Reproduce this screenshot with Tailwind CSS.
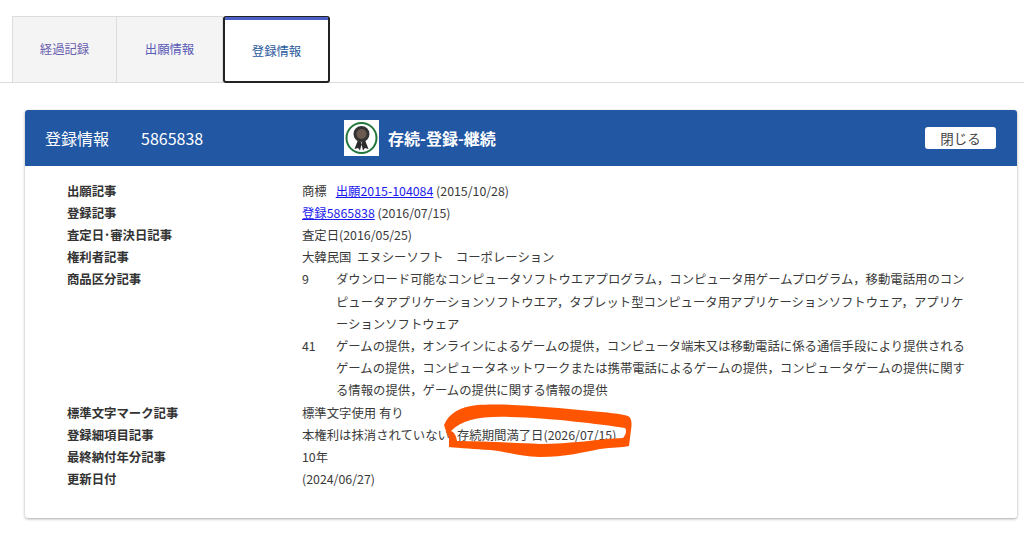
<!DOCTYPE html>
<html lang="ja">
<head>
<meta charset="utf-8">
<script src="https://cdn.jsdelivr.net/npm/@tailwindcss/browser@4"></script>
</head>
<body class="bg-white overflow-hidden font-['Noto_Sans_CJK_JP','Noto_Sans',sans-serif] text-[12.36px] leading-[22.2px] text-[#3a3a3a]">
<div class="relative h-[533px] w-[1024px] overflow-hidden pt-4">
  <div class="flex h-[67px] items-stretch border-b border-[#dcdcdc] pl-3">
    <div class="flex w-[105px] items-center justify-center border border-b-0 border-[#dcdcdc] bg-[#f4f4f4] pb-[1px] text-[#6a5fb0]">経過記録</div>
    <div class="flex w-[106px] items-center justify-center border-y border-r border-b-0 border-[#dcdcdc] bg-[#f4f4f4] pb-[1px] text-[#5a5ab8]">出願情報</div>
    <div class="-mb-px w-[107px] rounded-[3px] border-2 border-t border-[#222222] bg-white">
      <div class="flex h-full items-center justify-center border-t-[3px] border-t-[#4a5fc8] pt-[1px] text-[#2a5a9e]">登録情報</div>
    </div>
  </div>
  <div class="mx-[25px] mt-[27px] h-[408px] w-[992px] rounded-[3px] bg-white shadow-[0_1px_3px_rgba(0,0,0,0.35)]">
    <div class="flex h-[56px] items-center rounded-t-[3px] bg-[#2257a4] pl-[20px] pr-[21px] text-white">
      <span class="w-[96px] text-[16px]">登録情報</span>
      <span class="w-[203px] text-[16px]">5865838</span>
      <span class="flex h-[36px] w-[35px] items-center justify-center bg-white">
        <svg viewBox="0 0 35 36" class="h-[36px] w-[35px]">
          <circle cx="17.5" cy="18" r="15" fill="#fff" stroke="#22763a" stroke-width="2"/>
          <path d="M14 20l-3.5 9 3.500-1 2 2.500 2-8zM21 20l3.500 9-3.500-1-2 2.500-2-8z" fill="#2c2c2c"/>
          <circle cx="17.500" cy="14" r="6.500" fill="#6b5a50" stroke="#333" stroke-width="3"/>
        </svg>
      </span>
      <span class="ml-[9px] text-[16px] font-bold">存続-登録-継続</span>
      <span class="ml-auto flex h-[22px] w-[71px] items-center justify-center rounded-[3px] bg-white text-[13.5px] text-[#444444]">閉じる</span>
    </div>
    <div class="grid grid-cols-[235px_1fr] pl-[42px] pr-[50px] pt-[13.500px]">
      <div class="font-bold text-[#333333]">出願記事</div>
      <div>商標<a class="ml-[9px] text-[#1a1aee] underline">出願2015-104084</a> (2015/10/28)</div>
      <div class="font-bold text-[#333333]">登録記事</div>
      <div><a class="text-[#1a1aee] underline">登録5865838</a> (2016/07/15)</div>
      <div class="font-bold text-[#333333]">査定日･審決日記事</div>
      <div>査定日(2016/05/25)</div>
      <div class="font-bold text-[#333333]">権利者記事</div>
      <div>大韓民国&nbsp; エヌシーソフト　コーポレーション</div>
      <div class="font-bold text-[#333333]">商品区分記事</div>
      <div class="grid grid-cols-[34px_1fr]">
        <div>9</div>
        <div>ダウンロード可能なコンピュータソフトウエアプログラム，コンピュータ用ゲームプログラム，移動電話用のコンピュータアプリケーションソフトウエア，タブレット型コンピュータ用アプリケーションソフトウェア，アプリケーションソフトウェア</div>
        <div>41</div>
        <div>ゲームの提供，オンラインによるゲームの提供，コンピュータ端末又は移動電話に係る通信手段により提供されるゲームの提供，コンピュータネットワークまたは携帯電話によるゲームの提供，コンピュータゲームの提供に関する情報の提供，ゲームの提供に関する情報の提供</div>
      </div>
      <div class="font-bold text-[#333333]">標準文字マーク記事</div>
      <div>標準文字使用 有り</div>
      <div class="font-bold text-[#333333]">登録細項目記事</div>
      <div>本権利は抹消されていない<span class="ml-[7px]">存続期間満了日(2026/07/15)</span></div>
      <div class="font-bold text-[#333333]">最終納付年分記事</div>
      <div>10年</div>
      <div class="font-bold text-[#333333]">更新日付</div>
      <div>(2024/06/27)</div>
    </div>
  </div>
  <svg class="absolute left-0 top-0 h-[533px] w-[1024px] pointer-events-none" viewBox="0 0 1024 533">
    <path fill-rule="evenodd" fill="#ff5500" d="M444 425C449 413 460 407 477 405C505 403 550 407 590 411C605 412 622 414 628 416C632 418 632 424 631 430L629 446C622 448 612 447 600 449C585 452 565 457 540 457C520 457 505 451 490 450C475 449 460 448 449 447L449 438C448 434 445 430 444 425ZM451 431C454 432 456 435 457 441C480 441 515 443 540 444C570 444 600 439 623 438C626 434 627 431 625 428C600 424 550 418 510 417C480 416 462 420 451 431Z"/>
  </svg>
</div>
</body>
</html>
